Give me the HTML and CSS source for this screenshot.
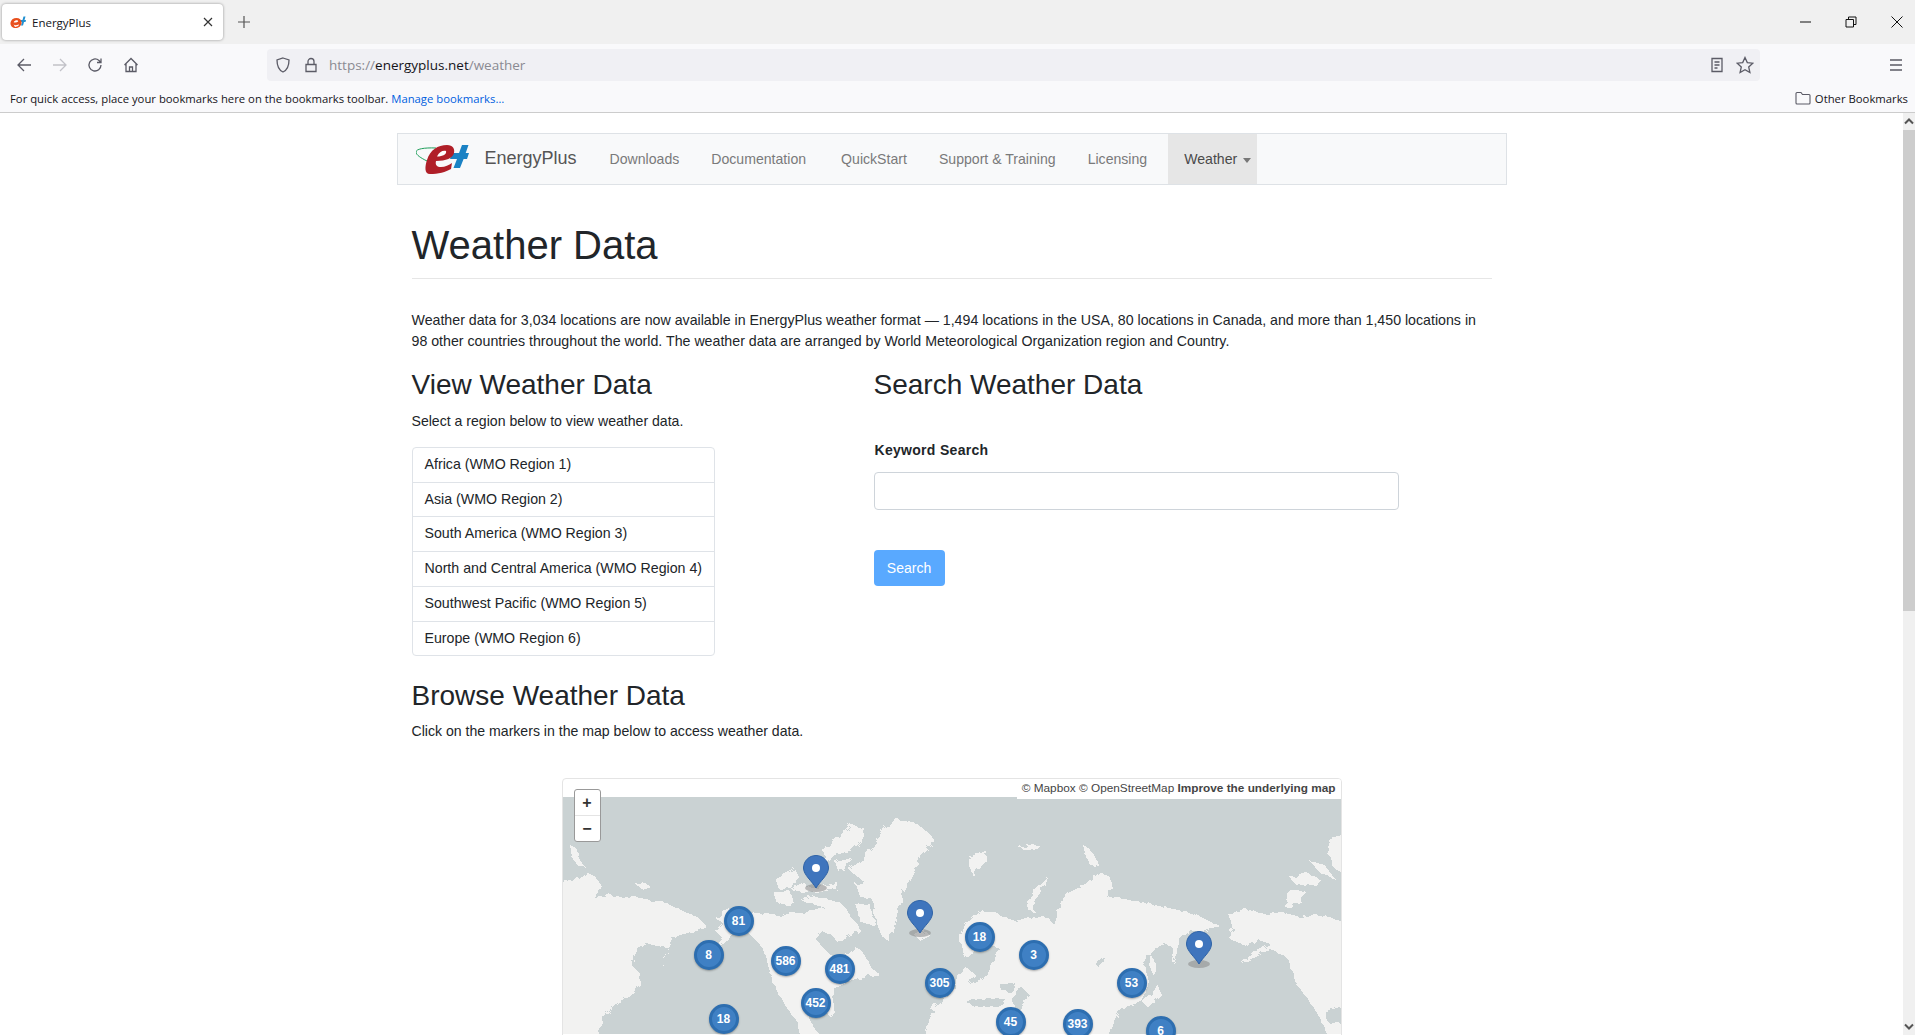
FILE: index.html
```html
<!DOCTYPE html>
<html lang="en">
<head>
<meta charset="utf-8">
<title>EnergyPlus</title>
<link rel="stylesheet" href="styles.css">
</head>
<body>
<div class="window">
  <header class="tabstrip">
    <div class="tab">
      <svg class="favicon" viewBox="0 0 16 14"><path d="M10 5H12.500L13.500 1.500H15.500L14.500 5H16L15.500 7H14L13 10.500H11L12 7H9.500Z" fill="#1f8fd0"/><ellipse cx="6" cy="8" rx="5.6" ry="5" fill="#e8501e" transform="rotate(-20 6 8)"/><path d="M3.6 7.2 C5 5 8 4.6 8.2 6.4 C7 7.4 5.4 7.6 3.6 7.2Z M3.6 9.6 C5 10.6 7 10.4 8.8 9.2 L8.4 11 L5 12 Z" fill="#fff"/></svg>
      <span class="tab-title">EnergyPlus</span>
      <svg class="tab-close" viewBox="0 0 10 10"><path d="M1 1L9 9M9 1L1 9"/></svg>
    </div>
    <svg class="new-tab" viewBox="0 0 12 12"><path d="M6 0V12M0 6H12"/></svg>
    <div class="win-controls">
      <svg class="win-ic" viewBox="0 0 12 12"><path d="M1 6H12"/></svg>
      <svg class="win-ic" viewBox="0 0 12 12"><path d="M1 3.5H8.5V11H1ZM3.5 3.5V1H11V8.5H8.5"/></svg>
      <svg class="win-ic" viewBox="0 0 12 12"><path d="M.5 .5L11.5 11.5M11.5 .5L.5 11.5"/></svg>
    </div>
  </header>
  <div class="toolbar">
    <div class="nav-btns">
      <svg class="tool-ic" viewBox="0 0 16 16"><path d="M15 8H2M8 2L2 8L8 14"/></svg>
      <svg class="tool-ic dim" viewBox="0 0 16 16"><path d="M1 8H14M8 2L14 8L8 14"/></svg>
      <svg class="tool-ic" viewBox="0 0 16 16"><path d="M14 8A6 6 0 1 1 12 3.5L14 5.5M14 1.5V5.5H10"/></svg>
      <svg class="tool-ic" viewBox="0 0 16 16"><path d="M1.5 8L8 1.5L14.5 8M3 7V14.5H13V7M6.5 14.5V10H9.5V14.5"/></svg>
    </div>
    <div class="urlbar">
      <svg class="tool-ic" viewBox="0 0 16 16"><path d="M8 1L14 3C14 9 12.500 13 8 15C3.500 13 2 9 2 3Z"/></svg>
      <svg class="tool-ic lock" viewBox="0 0 16 16"><path d="M3 7.500H13V14.500H3ZM5 7.500V4.500A3 3 0 0 1 11 4.500V7.500"/></svg>
      <span class="url"><span class="url-dim">https://</span>energyplus.net<span class="url-dim">/weather</span></span>
      <svg class="tool-ic reader" viewBox="0 0 16 16"><path d="M3 1.500H13V14.500H3ZM5.500 5H10.500M5.500 8H10.500M5.500 11H8.500"/></svg>
      <svg class="tool-ic star" viewBox="0 0 18 18"><path d="M9 1.500L11.300 6.600L16.800 7.200L12.700 11L13.900 16.500L9 13.700L4.100 16.500L5.300 11L1.200 7.200L6.700 6.600Z"/></svg>
    </div>
    <svg class="tool-ic burger" viewBox="0 0 16 16"><path d="M2 3H14M2 8H14M2 13H14"/></svg>
  </div>
  <div class="bookmarks">
    <span>For quick access, place your bookmarks here on the bookmarks toolbar. <a class="manage" href="#">Manage bookmarks…</a></span>
    <span class="other"><svg class="folder" viewBox="0 0 16 14"><path d="M1 3V12A1 1 0 0 0 2 13H14A1 1 0 0 0 15 12V4.500A1 1 0 0 0 14 3.500H7.500L6 1.500H2A1 1 0 0 0 1 2.500Z"/></svg>Other Bookmarks</span>
  </div>
  <div class="viewport">
    <main class="page">
      <nav class="navbar">
        <a class="brand" href="#">
          <svg class="logo" viewBox="0 0 53 31">
            <path d="M11 17C5 14 0 11 0 8C0 5 8 3.500 20 4" fill="none" stroke="#1f9e5a" stroke-width="1"/>
            <path d="M46 1H52.500L49.700 9H53L51 15H47.600L44 24H37.500L41 15H34L36 9H43Z" fill="#1b82c4"/>
            <path d="M14 30C8 30 9 22 11 16C14 6 22 1 31 1C37 1 39 5 38 9C37 14 30 17 20 17C19 21 21 23 25 23C29 23 33 21 36 19L35 25C30 28 22 30 14 30Z" fill="#b01f28"/>
            <path d="M21 12.500C23 8 27 6 30 7C31 10 27 12.500 21 12.500Z" fill="#fff"/>
          </svg>
          <span class="brand-name">EnergyPlus</span>
        </a>
        <a class="link" href="#">Downloads</a>
        <a class="link" href="#">Documentation</a>
        <a class="link quick" href="#">QuickStart</a>
        <a class="link" href="#">Support &amp; Training</a>
        <a class="link" href="#">Licensing</a>
        <a class="link active" href="#">Weather<span class="caret"></span></a>
      </nav>
      <div class="content">
        <h1 class="title">Weather Data</h1>
        <hr class="rule">
        <p class="intro">Weather data for 3,034 locations are now available in EnergyPlus weather format — 1,494 locations in the USA, 80 locations in Canada, and more than 1,450 locations in 98 other countries throughout the world. The weather data are arranged by World Meteorological Organization region and Country.</p>
        <div class="columns">
          <section>
            <h3 class="heading">View Weather Data</h3>
            <p class="lead">Select a region below to view weather data.</p>
            <ul class="regions">
              <li>Africa (WMO Region 1)</li>
              <li>Asia (WMO Region 2)</li>
              <li>South America (WMO Region 3)</li>
              <li>North and Central America (WMO Region 4)</li>
              <li>Southwest Pacific (WMO Region 5)</li>
              <li>Europe (WMO Region 6)</li>
            </ul>
          </section>
          <section>
            <h3 class="heading">Search Weather Data</h3>
            <label class="kw" for="kw">Keyword Search</label>
            <input class="kw-input" id="kw" type="text">
            <button class="search" type="button">Search</button>
          </section>
        </div>
        <h3 class="heading browse">Browse Weather Data</h3>
        <p class="lead tight">Click on the markers in the map below to access weather data.</p>
        <div class="map">
          <svg class="land" viewBox="562 798 780 237" shape-rendering="crispEdges">
            <filter id="coast" x="-2%" y="-2%" width="104%" height="104%">
              <feTurbulence type="fractalNoise" baseFrequency=".14" numOctaves="2" seed="4" result="noise"/>
              <feDisplacementMap in="SourceGraphic" in2="noise" scale="7"/>
            </filter>
            <g filter="url(#coast)">
            <g fill="#f2f2f1">
              <!-- eastern Russia, west edge -->
              <path d="M552 887L575 881L587 873L596 878L600 885L594 898L608 896L622 898L636 897L650 902L668 905L683 912L697 918L707 927L698 930L688 934L673 938L668 948L664 958L662 968L668 948L660 947L648 945L640 947L634 958L633 967L640 975L641 987L628 997L613 1007L603 1020L593 1045L552 1045Z"/>
              <path d="M570 846L576 849L580 860L585 868L577 866L572 858Z"/>
              <path d="M634 884L642 883L650 887L642 890Z"/>
              <!-- North America -->
              <path d="M723 913L735 908L750 913L765 915L783 917L792 913L802 914L817 910L829 905L840 903L846 910L850 917L857 925L862 933L850 936L837 943L832 936L822 932L816 940L824 950L832 958L840 960L848 956L855 948L862 952L868 962L872 970L880 975L870 977L860 980L850 983L842 986L833 990L833 1000L834 1012L830 1018L824 1008L817 1010L808 1014L813 1027L827 1045L803 1045L796 1022L783 1003L777 992L773 983L768 966L763 950L755 940L747 933L737 933L727 942L716 950L706 958L716 946L723 940L716 932L724 925L716 920Z"/>
              <!-- Arctic islands -->
              <path d="M775 881L785 875L795 870L800 880L790 888L778 889Z"/>
              <path d="M790 890L800 885L815 888L838 884L836 890L820 893L802 893Z"/>
              <path d="M775 893L790 892L795 905L785 906L776 903Z"/>
              <path d="M800 900L815 897L830 901L842 905L830 908L812 906Z"/>
              <path d="M822 850L838 838L852 826L865 830L862 842L850 852L835 856L827 862L817 868L824 856Z"/>
              <path d="M835 862L850 858L846 870L838 872Z"/>
              <path d="M856 885L870 882L880 892L875 900L860 898Z"/>
              <path d="M855 905L870 905L875 925L862 925Z"/>
              <!-- Greenland -->
              <path d="M873 848L885 828L897 820L917 825L930 835L934 842L921 855L917 867L903 893L890 943L880 936L874 912L873 903L867 885L848 870L862 862Z"/>
              <!-- Iceland -->
              <path d="M913 935L925 932L930 937L920 942Z"/>
              <!-- Svalbard, Franz Josef -->
              <path d="M967 858L978 855L987 853L985 866L975 870L973 878Z"/>
              <path d="M1017 848L1030 846L1043 848L1030 852Z"/>
              <path d="M1083 846L1090 850L1096 860L1100 868L1090 866L1086 858Z"/>
              <!-- Novaya Zemlya -->
              <path d="M1026 905L1035 890L1046 878L1048 880L1040 894L1032 906L1036 914L1030 913Z"/>
              <!-- Eurasia -->
              <path d="M940 1003L955 988L957 977L965 968L975 975L970 985L985 978L990 967L1000 950L985 945L972 955L964 958L960 942L965 925L980 913L995 913L1003 917L1015 922L1030 918L1047 917L1053 925L1062 900L1070 893L1085 885L1100 873L1110 878L1112 885L1107 898L1125 900L1137 903L1160 907L1187 913L1205 920L1220 927L1205 932L1203 933L1190 932L1180 940L1173 966L1172 948L1165 945L1153 950L1142 965L1147 970L1148 990L1140 1003L1125 1008L1120 1010L1115 1020L1107 1045L938 1045L950 1020L930 1010Z"/>
              <!-- Sakhalin / Japan -->
              <path d="M1150 955L1156 965L1155 978L1150 970Z"/>
              <path d="M1152 995L1158 985L1160 996L1148 1008L1142 1003Z"/>
              <!-- Africa -->
              <path d="M927 1027L940 1005L962 1000L990 1003L1008 1010L1017 1045L925 1045Z"/>
              <!-- Alaska/NA wrap, east edge -->
              <path d="M1228 915L1245 910L1265 915L1282 913L1300 918L1315 915L1352 925L1352 965L1352 1045L1332 1045L1318 1015L1308 1000L1296 985L1290 965L1285 957L1270 950L1258 957L1240 965L1255 953L1270 945L1262 942L1240 945L1228 938L1234 930Z"/>
              <path d="M1290 890L1305 892L1300 905L1285 908Z"/>
              <path d="M1290 878L1305 873L1320 880L1315 887L1295 885Z"/>
              <path d="M1330 840L1352 835L1352 880L1335 870L1328 855Z"/>
              <path d="M1310 862L1325 866L1335 880L1320 874Z"/>
            </g>
            <g fill="#cad2d3">
              <path d="M1012 1000L1022 988L1028 995L1024 1008L1016 1010Z"/>
              <path d="M965 1002L985 1000L1005 1000L1000 1008L975 1008Z"/>
              <path d="M1000 985L1015 984L1015 992L1002 992Z"/>
              <path d="M1325 1012L1352 1005L1352 1025L1328 1024Z"/>
              <path d="M842 968L848 962L852 972L845 978Z"/>
              <path d="M1095 965L1105 955L1100 970Z"/>
            </g>
            </g>
          </svg>
          <div class="zoom">
            <span class="zoom-btn">+</span>
            <span class="zoom-btn">−</span>
          </div>
          <div class="attrib">© Mapbox © OpenStreetMap <b>Improve the underlying map</b></div>
          <svg class="pin p1" viewBox="0 0 26 44"><ellipse class="pin-shadow" cx="13" cy="33" rx="11" ry="4"/><path class="pin-body" d="M13 .5C6 .5 .5 6 .5 13C.5 20 9 26 13 33C17 26 25.500 20 25.500 13C25.500 6 20 .5 13 .5Z"/><circle cx="13" cy="13" r="4" fill="#fff"/></svg>
          <svg class="pin p2" viewBox="0 0 26 44"><ellipse class="pin-shadow" cx="13" cy="33" rx="11" ry="4"/><path class="pin-body" d="M13 .5C6 .5 .5 6 .5 13C.5 20 9 26 13 33C17 26 25.500 20 25.500 13C25.500 6 20 .5 13 .5Z"/><circle cx="13" cy="13" r="4" fill="#fff"/></svg>
          <svg class="pin p3" viewBox="0 0 26 44"><ellipse class="pin-shadow" cx="13" cy="33" rx="11" ry="4"/><path class="pin-body" d="M13 .5C6 .5 .5 6 .5 13C.5 20 9 26 13 33C17 26 25.500 20 25.500 13C25.500 6 20 .5 13 .5Z"/><circle cx="13" cy="13" r="4" fill="#fff"/></svg>
          <span class="cluster" style="left:161px;top:127px">81</span>
          <span class="cluster" style="left:131px;top:161px">8</span>
          <span class="cluster" style="left:208px;top:167px">586</span>
          <span class="cluster" style="left:262px;top:175px">481</span>
          <span class="cluster" style="left:238px;top:209px">452</span>
          <span class="cluster" style="left:146px;top:225px">18</span>
          <span class="cluster" style="left:362px;top:189px">305</span>
          <span class="cluster" style="left:402px;top:143px">18</span>
          <span class="cluster" style="left:456px;top:161px">3</span>
          <span class="cluster" style="left:554px;top:189px">53</span>
          <span class="cluster" style="left:433px;top:228px">45</span>
          <span class="cluster" style="left:500px;top:230px">393</span>
          <span class="cluster" style="left:583px;top:237px">6</span>
        </div>
      </div>
    </main>
    <div class="scrollbar">
      <svg class="sb-arrow" viewBox="0 0 12 12"><path d="M2 8L6 4L10 8"/></svg>
      <div class="sb-thumb"></div>
      <svg class="sb-arrow sb-down" viewBox="0 0 12 12"><path d="M2 4L6 8L10 4"/></svg>
    </div>
  </div>
</div>
</body>
</html>
```
FILE: styles.css
```css
* { box-sizing: border-box; }
html, body { margin: 0; height: 100%; overflow: hidden; }
body { font-family: "Liberation Sans", Arial, sans-serif; font-size: 14px; color: #212529; background: #fff; }
a { text-decoration: none; color: inherit; }
.window { height: 100%; display: flex; flex-direction: column; }

.tabstrip { height: 44px; background: #f0f0f0; display: flex; align-items: center; padding-left: 2px; flex: none; }
.tab { width: 221px; height: 36px; background: #fff; border-radius: 4px; box-shadow: 0 0 3px rgba(0,0,0,.4); display: flex; align-items: center; padding: 0 10px 0 8px; font-family: "Open Sans", sans-serif; font-size: 11.5px; color: #15141a; }
.favicon { width: 16px; height: 14px; flex: none; }
.tab-title { margin-left: 6px; flex: 1; }
.tab-close { width: 10px; height: 10px; fill: none; stroke: #333; stroke-width: 1.2; }
.new-tab { width: 12px; height: 12px; margin-left: 15px; fill: none; stroke: #555; stroke-width: 1.2; }
.win-controls { margin-left: auto; display: flex; gap: 34px; padding-right: 12px; }
.win-ic { width: 12px; height: 12px; fill: none; stroke: #111; stroke-width: 1; }

.toolbar { height: 42px; background: #f9f9fb; display: flex; align-items: center; flex: none; }
.nav-btns { display: flex; gap: 19.5px; padding-left: 16px; width: 267px; }
.tool-ic { width: 16px; height: 16px; fill: none; stroke: #5b5b66; stroke-width: 1.3; flex: none; }
.dim { stroke: #c2c2c8; }
.urlbar { width: 1493px; height: 32px; background: #f0f0f4; border-radius: 4px; display: flex; align-items: center; padding: 0 6px 0 8px; font-family: "Open Sans", sans-serif; font-size: 13.5px; color: #15141a; }
.lock { margin-left: 12px; }
.url { margin-left: 10px; flex: 1; }
.url-dim { color: #8a8a92; }
.reader { margin-right: 11px; }
.star { width: 18px; height: 18px; }
.burger { margin-left: 128px; }

.bookmarks { height: 27px; background: #f9f9fb; border-bottom: 1px solid #ccc; display: flex; align-items: center; justify-content: space-between; padding: 0 7px 2px 10px; font-family: "Open Sans", sans-serif; font-size: 11.3px; color: #15141a; flex: none; }
.manage { color: #0060df; }
.other { display: flex; align-items: center; gap: 4px; }
.folder { width: 16px; height: 14px; fill: none; stroke: #5b5b66; stroke-width: 1.1; }

.viewport { flex: 1; display: flex; min-height: 0; }
.page { flex: 1; overflow: hidden; padding-top: 20px; }
.scrollbar { width: 12px; background: #f0f0f0; display: flex; flex-direction: column; flex: none; }
.sb-arrow { width: 12px; height: 17px; fill: none; stroke: #555; stroke-width: 2; flex: none; }
.sb-down { margin-top: auto; }
.sb-thumb { height: 481px; flex: none; background: #cdcdcd; }

.navbar { width: 1110px; height: 52px; margin: 0 auto; display: flex; align-items: stretch; background: #f8f9fa; border: 1px solid #dee2e6; font-size: 14.1px; }
.brand { display: flex; align-items: center; margin-left: 18px; margin-right: 17px; color: #555; }
.logo { width: 53px; height: 31px; }
.brand-name { margin-left: 16px; font-size: 18px; padding-bottom: 2px; }
.link { display: flex; align-items: center; padding: 0 16px; color: #7a7a7a; }
.quick { margin-left: 3px; }
.active { margin-left: 5px; color: #4a4a4a; background: #e6e6e6; padding-right: 6px; }
.caret { width: 0; height: 0; margin-left: 6px; margin-top: 2px; border-top: 5px solid #777; border-left: 4.5px solid transparent; border-right: 4.5px solid transparent; }

.content { width: 1110px; margin: 0 auto; padding: 0 15px; }
.title { margin: 36px 0 0; font-size: 40px; line-height: 48px; font-weight: 400; }
.rule { margin: 9px 0 0; border: 0; border-top: 1px solid #e6e6e6; }
.intro { margin: 31px 0 0; font-size: 14.2px; line-height: 21px; }
.columns { display: grid; grid-template-columns: 462px 1fr; margin-top: 16px; }
.heading { margin: 0; font-size: 28px; line-height: 34px; font-weight: 400; }
.lead { margin: 9px 0 0; font-size: 14.1px; line-height: 21px; }
.tight { margin-top: 8px; }
.regions { list-style: none; margin: 15px 0 0; padding: 0; width: 303px; border: 1px solid #dfe3e8; border-radius: 4px; }
.regions li { padding: 6px 0 6px 12px; line-height: 21.7px; font-size: 14.2px; white-space: nowrap; }
.regions li + li { border-top: 1px solid #dfe3e8; }
.kw { display: block; margin: 38px 0 0 1px; font-weight: 700; font-size: 14px; line-height: 21px; letter-spacing: .3px; }
.kw-input { display: block; width: 525px; height: 38px; margin-top: 11px; border: 1px solid #ced4da; border-radius: 4px; background: #fff; }
.search { display: block; width: 71px; height: 36px; margin-top: 40px; background: #59a9ff; border: 0; border-radius: 4px; color: #fff; font: 14px "Liberation Sans", Arial, sans-serif; }
.browse { margin-top: 23px; }

.map { position: relative; width: 780px; height: 500px; margin: 36px 0 0 150px; border: 1px solid #e4e4e4; border-radius: 4px; background: #fff; overflow: hidden; }
.land { position: absolute; left: -1px; top: 18px; width: 780px; height: 237px; background: #cad2d3; }
.zoom { position: absolute; left: 11px; top: 10px; width: 27px; height: 53px; display: flex; flex-direction: column; background: #fff; border: 1px solid #999; border-radius: 3px; }
.zoom-btn { flex: 1; display: flex; align-items: center; justify-content: center; font: 700 16px "Liberation Sans", Arial, sans-serif; color: #333; }
.zoom-btn + .zoom-btn { border-top: 1px solid #e4e4e4; }
.attrib { position: absolute; right: 0; top: 0; height: 20px; padding: 0 5px; background: #fff; font-size: 11.8px; line-height: 19px; color: #444; }
.pin { position: absolute; width: 26px; height: 44px; }
.pin-body { fill: #3f75bd; stroke: #2f63a6; stroke-width: 1; }
.pin-shadow { fill: #888; opacity: .55; }
.p1 { left: 240px; top: 76px; }
.p2 { left: 344px; top: 121px; }
.p3 { left: 623px; top: 152px; }
.cluster { position: absolute; width: 30px; height: 30px; display: flex; align-items: center; justify-content: center; border-radius: 50%; background: #3f80c4; border: 3px solid #2d6eb0; box-shadow: 0 1px 2px rgba(0,0,0,.3); color: #fff; font-weight: 700; font-size: 12px; }
```
